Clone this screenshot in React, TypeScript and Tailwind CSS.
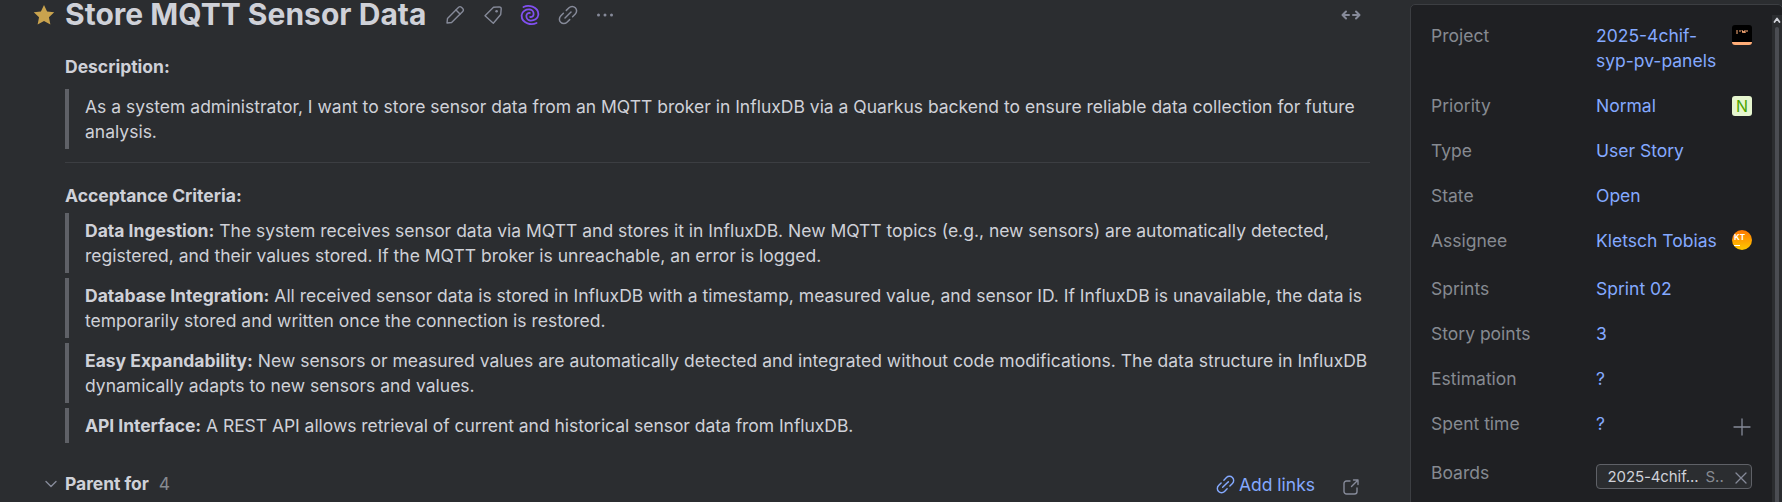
import React from "react";

const stroke = { fill: "none", stroke: "currentColor", strokeLinecap: "round", strokeLinejoin: "round" } as const;

const swirlArm = "M3.500 2C6.500 .6 10 .8 12.500 1.700C16.500 3.200 18.600 6.600 18.300 10C17.900 13.600 14.200 15.900 10 15.500C7.600 15.200 6.200 13 6.400 10.600C6.600 8.600 8.200 7.700 9.800 8";

function LinkIcon({ className }: { className: string }) {
  return (
    <svg viewBox="0 0 20 20" className={className} {...stroke} strokeWidth="1.5">
      <path d="M7 13l6-6" />
      <path d="M8.300 5.400l2.700-2.700a4.400 4.400 0 0 1 6.300 6.300l-2.700 2.700" />
      <path d="M5.400 8.300l-2.700 2.700a4.400 4.400 0 0 0 6.300 6.300l2.700-2.700" />
    </svg>
  );
}

function Quote({ title, children, className = "" }: { title?: string; children: React.ReactNode; className?: string }) {
  return (
    <div className={`border-l-4 border-[#5f6167] pl-4 py-[5px] ${className}`}>
      {title && <b className="font-bold">{title}</b>} {children}
    </div>
  );
}

function Field({ label, value, className, children }: { label: string; value?: React.ReactNode; className: string; children?: React.ReactNode }) {
  return (
    <div className={`flex items-start ${className}`}>
      <span className="w-[165px] shrink-0 text-[#868a91]">{label}</span>
      {value && <span className="w-[136px] shrink-0 whitespace-nowrap text-[#84a9ff]">{value}</span>}
      {children}
    </div>
  );
}

export default function App() {
  return (
    <div className="flex h-[502px] w-[1782px] overflow-hidden bg-[#2b2d30] font-['Inter',sans-serif] text-[17.5px] leading-[25px] text-[#cfd1d8]">
      <main className="flex w-[1410px] shrink-0 flex-col pl-[65px]">
        <header className="-ml-8 flex h-[30px] items-center">
          <svg viewBox="0 0 20 20" className="mr-[10px] h-[22px] w-[22px] shrink-0" fill="#c9a34e">
            <path d="M10 .8l2.800 6 6.500.8-4.800 4.500 1.300 6.600L10 15.500l-5.800 3.200 1.300-6.600L.7 7.600l6.500-.8z" />
          </svg>
          <h1 className="mb-[2px] w-[380px] whitespace-nowrap text-[30px] font-bold leading-[28px] tracking-[0.02px]">Store MQTT Sensor Data</h1>
          <div className="flex items-center gap-[17.500px] text-[#868a99]">
            <svg viewBox="0 0 20 20" className="h-5 w-5" {...stroke} strokeWidth="1.4">
              <path d="M2 18l.5-4.600L13.600 2.300a2 2 0 0 1 2.800 0l1.300 1.300a2 2 0 0 1 0 2.800L6.600 17.500z" />
              <path d="M11 5l4 4" />
            </svg>
            <svg viewBox="0 0 20 20" className="h-5 w-5" {...stroke} strokeWidth="1.4">
              <path d="M10.500 2.200l5.800-.3q2 0 1.900 2l-.5 5.600-7.400 8.800-8.300-7.500z" />
              <circle cx="13.600" cy="6.300" r="1.300" fill="currentColor" stroke="none" />
            </svg>
            <svg viewBox="0 0 20 20" className="h-5 w-5 text-[#8150f0]" {...stroke} strokeWidth="1.800">
              <path d={swirlArm} />
              <path d={swirlArm} transform="rotate(180 10 10)" />
            </svg>
            <LinkIcon className="h-5 w-5" />
            <svg viewBox="0 0 20 20" className="h-5 w-5" fill="currentColor">
              <circle cx="3.500" cy="10" r="1.500" /><circle cx="10" cy="10" r="1.500" /><circle cx="16.500" cy="10" r="1.500" />
            </svg>
          </div>
          <svg viewBox="0 0 20 12" className="ml-auto mr-[49px] h-3 w-5 text-[#868a99]" {...stroke} strokeWidth="2">
            <path d="M8 6H2M5 2.500L1.500 6 5 9.500M12 6h6M15 2.500L18.500 6 15 9.500" />
          </svg>
        </header>
        <h2 className="mt-[24px] font-bold">Description:</h2>
        <Quote className="mt-[10px] w-[1305px]">
          As a system administrator, I want to store sensor data from an MQTT broker in InfluxDB via a Quarkus backend to ensure reliable data collection for future<br />analysis.
        </Quote>
        <hr className="mt-[13px] w-[1305px] border-[#3c3e42]" />
        <h2 className="mt-[20px] font-bold">Acceptance Criteria:</h2>
        <div className="mt-[5px] flex flex-col gap-[5px] whitespace-nowrap">
          <Quote title="Data Ingestion:">
            The system receives sensor data via MQTT and stores it in InfluxDB. New MQTT topics (e.g., new sensors) are automatically detected,<br />registered, and their values stored. If the MQTT broker is unreachable, an error is logged.
          </Quote>
          <Quote title="Database Integration:">
            All received sensor data is stored in InfluxDB with a timestamp, measured value, and sensor ID. If InfluxDB is unavailable, the data is<br />temporarily stored and written once the connection is restored.
          </Quote>
          <Quote title="Easy Expandability:">
            New sensors or measured values are automatically detected and integrated without code modifications. The data structure in InfluxDB<br />dynamically adapts to new sensors and values.
          </Quote>
          <Quote title="API Interface:" className="tracking-[-0.045px]">A REST API allows retrieval of current and historical sensor data from InfluxDB.</Quote>
        </div>
        <div className="-ml-5 mt-[28px] flex h-[25px] shrink-0 items-center">
          <svg viewBox="0 0 12 8" className="mr-2 h-2 w-3 text-[#868a99]" {...stroke} strokeWidth="1.400"><path d="M1 1.500l5 5 5-5" /></svg>
          <h2 className="font-bold tracking-[-0.05px]">Parent for</h2>
          <span className="ml-[10px] text-[#868a91]">4</span>
          <div className="ml-auto mt-[2px] flex items-center text-[#84a9ff]">
            <LinkIcon className="mr-[4px] h-[19px] w-[19px]" />
            <span className="whitespace-nowrap">Add links</span>
            <svg viewBox="0 0 16 16" className="ml-[28px] mr-[51px] mt-[4px] h-4 w-4 text-[#868a99]" {...stroke} strokeWidth="1.400">
              <path d="M7 2H3.500a2.500 2.500 0 0 0-2.500 2.500v8A2.500 2.500 0 0 0 3.500 15h8a2.500 2.500 0 0 0 2.500-2.500V9M10.500 1H15v4.500M15 1L8.500 7.500" />
            </svg>
          </div>
        </div>
      </main>
      <aside className="mt-1 flex h-[520px] flex-1 rounded-tl-[5px] rounded-tr-[5px] border border-[#3c3e42] bg-[#1f2023]">
        <div className="flex w-[361px] shrink-0 flex-col pl-[20px] pt-[18px]">
          <Field label="Project" value={<>2025-4chif-<br />syp-pv-panels</>} className="h-[70px]">
            <span className="mt-[2px] flex h-5 w-5 flex-col items-center overflow-hidden rounded-[3px] border-b-[3px] border-[#ffad78] bg-black">
              <svg viewBox="0 0 12 5" className="mt-[5px] h-[5px] w-3" fill="none" stroke="#ffad78"><path d="M1 0v4M3 1h2M6 0l1 3 1-2 1 2V0M11 0v2" /></svg>
            </span>
          </Field>
          <Field label="Priority" value="Normal" className="h-[45px]">
            <span className="mt-[3px] flex h-5 w-5 items-center justify-center rounded-[3px] bg-[#e6f6cf] text-[16px] text-[#4da400]">N</span>
          </Field>
          <Field label="Type" value="User Story" className="h-[45px]" />
          <Field label="State" value="Open" className="h-[45px]" />
          <Field label="Assignee" value="Kletsch Tobias" className="h-[48px]">
            <span className="mt-[2px] flex h-5 w-5 flex-col overflow-hidden rounded-full bg-linear-to-b from-[#ff7500] to-[#ffc800] pl-[2px] pt-[3px] text-[8px] font-bold leading-[8px] text-white">
              KT<span className="mt-[4px] h-px w-[6px] shrink-0 bg-white" />
            </span>
          </Field>
          <Field label="Sprints" value="Sprint 02" className="h-[45px]" />
          <Field label="Story points" value="3" className="h-[45px]" />
          <Field label="Estimation" value="?" className="h-[45px]" />
          <Field label="Spent time" value="?" className="h-[49px]">
            <svg viewBox="0 0 20 20" className="mt-[6px] h-5 w-5 text-[#868a99]" {...stroke} strokeWidth="1.300"><path d="M10 2v16M2 10h16" /></svg>
          </Field>
          <Field label="Boards" className="h-[45px]">
            <div className="mt-[4px] flex h-[25px] w-[156px] items-center rounded-[4px] border border-[#5f6167] bg-[#2b2d30] pl-[10.500px] text-[15px]">
              <span className="w-[98px] whitespace-nowrap tracking-[-0.1px]">2025-4chif...</span>
              <span className="w-[29px] text-[#868a91]">S..</span>
              <svg viewBox="0 0 12 12" className="mt-[3px] h-3 w-3 shrink-0 text-[#868a99]" {...stroke} strokeWidth="1.300"><path d="M1 1l10 10M11 1L1 11" /></svg>
            </div>
          </Field>
        </div>
        <div className="mt-[10px] flex w-[10px] flex-col items-center bg-[#2b2d30]">
          <svg viewBox="0 0 8 8" className="mt-[1px] h-2 w-2" {...stroke} stroke="#cfd1d8" strokeWidth="1.800"><path d="M1.500 6L4 2.500 6.500 6" /></svg>
          <div className="mt-[3px] w-1 flex-1 rounded-full bg-[#4b4d53]" />
        </div>
      </aside>
    </div>
  );
}
